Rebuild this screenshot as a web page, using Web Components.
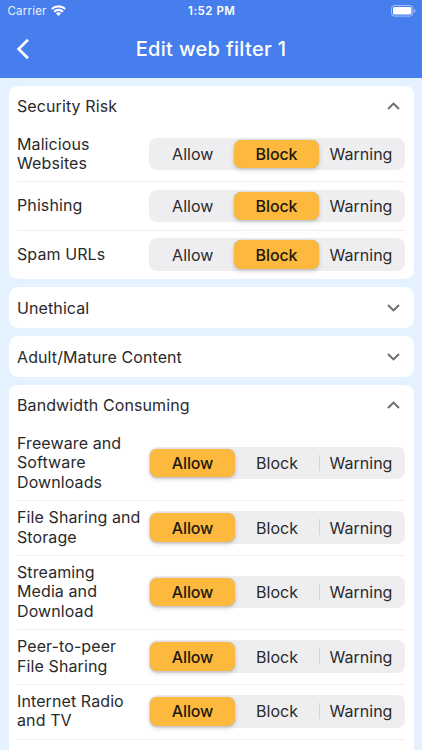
<!DOCTYPE html>
<html lang="en">
<head>
<meta charset="utf-8">
<title>Edit web filter</title>
<style>
html, body { margin: 0; height: 100%; overflow: hidden; background: #e4f1fe; }
body { font-family: Inter, Roboto, sans-serif; color: #2a2a2c; }
</style>
</head>
<body>
<filter-screen></filter-screen>
<script>
const define = (name, html, setup) => customElements.define(name, class extends HTMLElement {
  connectedCallback() {
    if (this.shadowRoot) return;
    const t = document.createElement('template');
    t.innerHTML = html;
    const root = this.attachShadow({ mode: 'open' });
    root.append(t.content.cloneNode(true));
    if (setup) setup(this, root);
  }
});

define('status-bar', `
<style>
:host { display: grid; grid-template-columns: 1fr auto 1fr; align-items: center; height: 22px; padding: 0 6px 0 7.5px; color: #fff; font-size: 11.5px; line-height: 14px; box-sizing: border-box; }
.left { display: flex; align-items: center; gap: 4px; letter-spacing: .2px; }
.left span { opacity: .9; }
.left svg { margin-top: -1px; }
.time { font-weight: 600; letter-spacing: .5px; }
.right { justify-self: end; display: flex; margin-top: -1px; }
svg { display: block; }
</style>
<div class="left"><span>Carrier</span>
<svg width="15" height="11" viewBox="0 0 15 11"><g fill="none" stroke="#fff" stroke-width="2.1"><path d="M.8 4.1a9.6 9.6 0 0 1 13.4 0M3.1 6.7a6.2 6.2 0 0 1 8.8 0"/></g><path d="M7.5 11 5 8.4a3.6 3.6 0 0 1 5 0z" fill="#fff"/></svg></div>
<div class="time">1:52 PM</div>
<div class="right"><svg width="25" height="12" viewBox="0 0 25 12"><rect x=".5" y=".5" width="21.4" height="10.6" rx="3" fill="none" stroke="#fff" stroke-opacity=".5"/><rect x="2" y="2" width="18.4" height="7.6" rx="1.6" fill="#fff"/><path d="M23.2 4v3.8q1.3-.5 1.3-1.9T23.2 4z" fill="#fff" fill-opacity=".5"/></svg></div>`);

define('nav-bar', `
<style>
:host { display: grid; grid-template-columns: 40px 1fr 40px; align-items: center; height: 55.5px; color: #fff; }
svg { display: block; margin: -1px 0 0 16px; }
h1 { margin: -1px 0 0; text-align: center; font-size: 20px; font-weight: 500; line-height: 24px; letter-spacing: .33px; }
</style>
<svg width="14" height="22" viewBox="0 0 14 22" fill="none" stroke="#fff" stroke-width="2.7"><path d="M12 1.8 2.6 11l9.4 9.2"/></svg>
<h1><slot></slot></h1>`);

define('segment-control', `
<style>
:host { display: grid; grid-template-columns: 85px 85px 85px; flex: none; width: 256.5px; height: 32.4px; padding: 2px .5px 2px 1px; box-sizing: border-box; border-radius: 8px; background: #eeeef0; }
span { display: flex; align-items: center; justify-content: center; font-size: 16px; border-radius: 7px; position: relative; }
span:nth-of-type(1) { padding-left: 1.4px; }
span:nth-of-type(3) { padding-right: 2px; }
.on { background: #fdb93d; color: #1f1a10; font-weight: 500; letter-spacing: -.1px; box-shadow: 0 2px 5px rgba(0,0,0,.18), 0 0 1px rgba(0,0,0,.25); z-index: 1; }
.on:nth-of-type(1) { padding-left: 0; margin: 0 -.5px 0 .5px; }
.on:nth-of-type(2) { margin: 0 .5px 0 -.5px; }
.line::before { content: ""; position: absolute; left: -1px; top: 6px; width: 1px; height: 16px; background: #d4d4d8; }
</style>`, (host, root) => {
  const names = ['Allow', 'Block', 'Warning'];
  const on = names.indexOf(host.getAttribute('value'));
  names.forEach((name, i) => {
    const s = document.createElement('span');
    s.textContent = name;
    if (i === on) s.className = 'on';
    else if (i > 0 && i - 1 !== on) s.className = 'line';
    root.append(s);
  });
});

define('filter-row', `
<style>
:host { display: flex; align-items: center; justify-content: space-between; margin: 0 8.5px 0 8px; padding: 7.75px 0; border-bottom: 1px solid #efeff1; }
:host(:last-of-type) { border-bottom: 0; padding-bottom: 8.2px; }
.name { font-size: 16px; line-height: 19.2px; letter-spacing: .1px; padding-left: .5px; white-space: pre; }
</style>
<div class="name"><slot></slot></div>`, (host, root) => {
  const control = document.createElement('segment-control');
  control.setAttribute('value', host.getAttribute('value'));
  root.append(control);
});

define('filter-card', `
<style>
:host { display: block; background: #fff; border-radius: 8.5px; }
header { display: flex; align-items: center; justify-content: space-between; height: 40.7px; padding: 0 14px 0 8.5px; font-size: 16px; letter-spacing: .1px; }
:host([open]) header { margin-bottom: .7px; }
:host([open]) svg { transform: rotate(180deg); }
svg { display: block; }
</style>
<header><span class="title"></span><svg width="13" height="8" viewBox="0 0 13 8" fill="none" stroke="#6c6c6f" stroke-width="1.9"><path d="m1 1 5.5 5.5L12 1"/></svg></header>
<slot></slot>`, (host, root) => {
  root.querySelector('.title').textContent = host.getAttribute('label');
});

define('filter-screen', `
<style>
:host { display: block; height: 750px; overflow: hidden; background: #e4f1fe; }
.top { background: #477eed; }
main { display: flex; flex-direction: column; gap: 8.25px; padding: 8px 8.5px 0; }
.next { height: 60px; margin: 0 8.5px 0 8px; border-top: 1px solid #efeff1; }
</style>
<div class="top"><status-bar></status-bar><nav-bar>Edit web filter 1</nav-bar></div>
<main></main>`, (host, root) => {
  const data = [
    ['Security Risk', 'Block', ['Malicious\nWebsites', 'Phishing', 'Spam URLs']],
    ['Unethical'],
    ['Adult/Mature Content'],
    ['Bandwidth Consuming', 'Allow', ['Freeware and\nSoftware\nDownloads', 'File Sharing and\nStorage', 'Streaming\nMedia and\nDownload', 'Peer-to-peer\nFile Sharing', 'Internet Radio\nand TV']]
  ];
  const main = root.querySelector('main');
  for (const [label, value, rows] of data) {
    const card = document.createElement('filter-card');
    card.setAttribute('label', label);
    if (rows) card.setAttribute('open', '');
    for (const text of rows || []) {
      const row = document.createElement('filter-row');
      row.textContent = text;
      row.setAttribute('value', value);
      card.append(row);
    }
    main.append(card);
  }
  const next = document.createElement('div');
  next.className = 'next';
  main.lastElementChild.append(next);
});
</script>
</body>
</html>
